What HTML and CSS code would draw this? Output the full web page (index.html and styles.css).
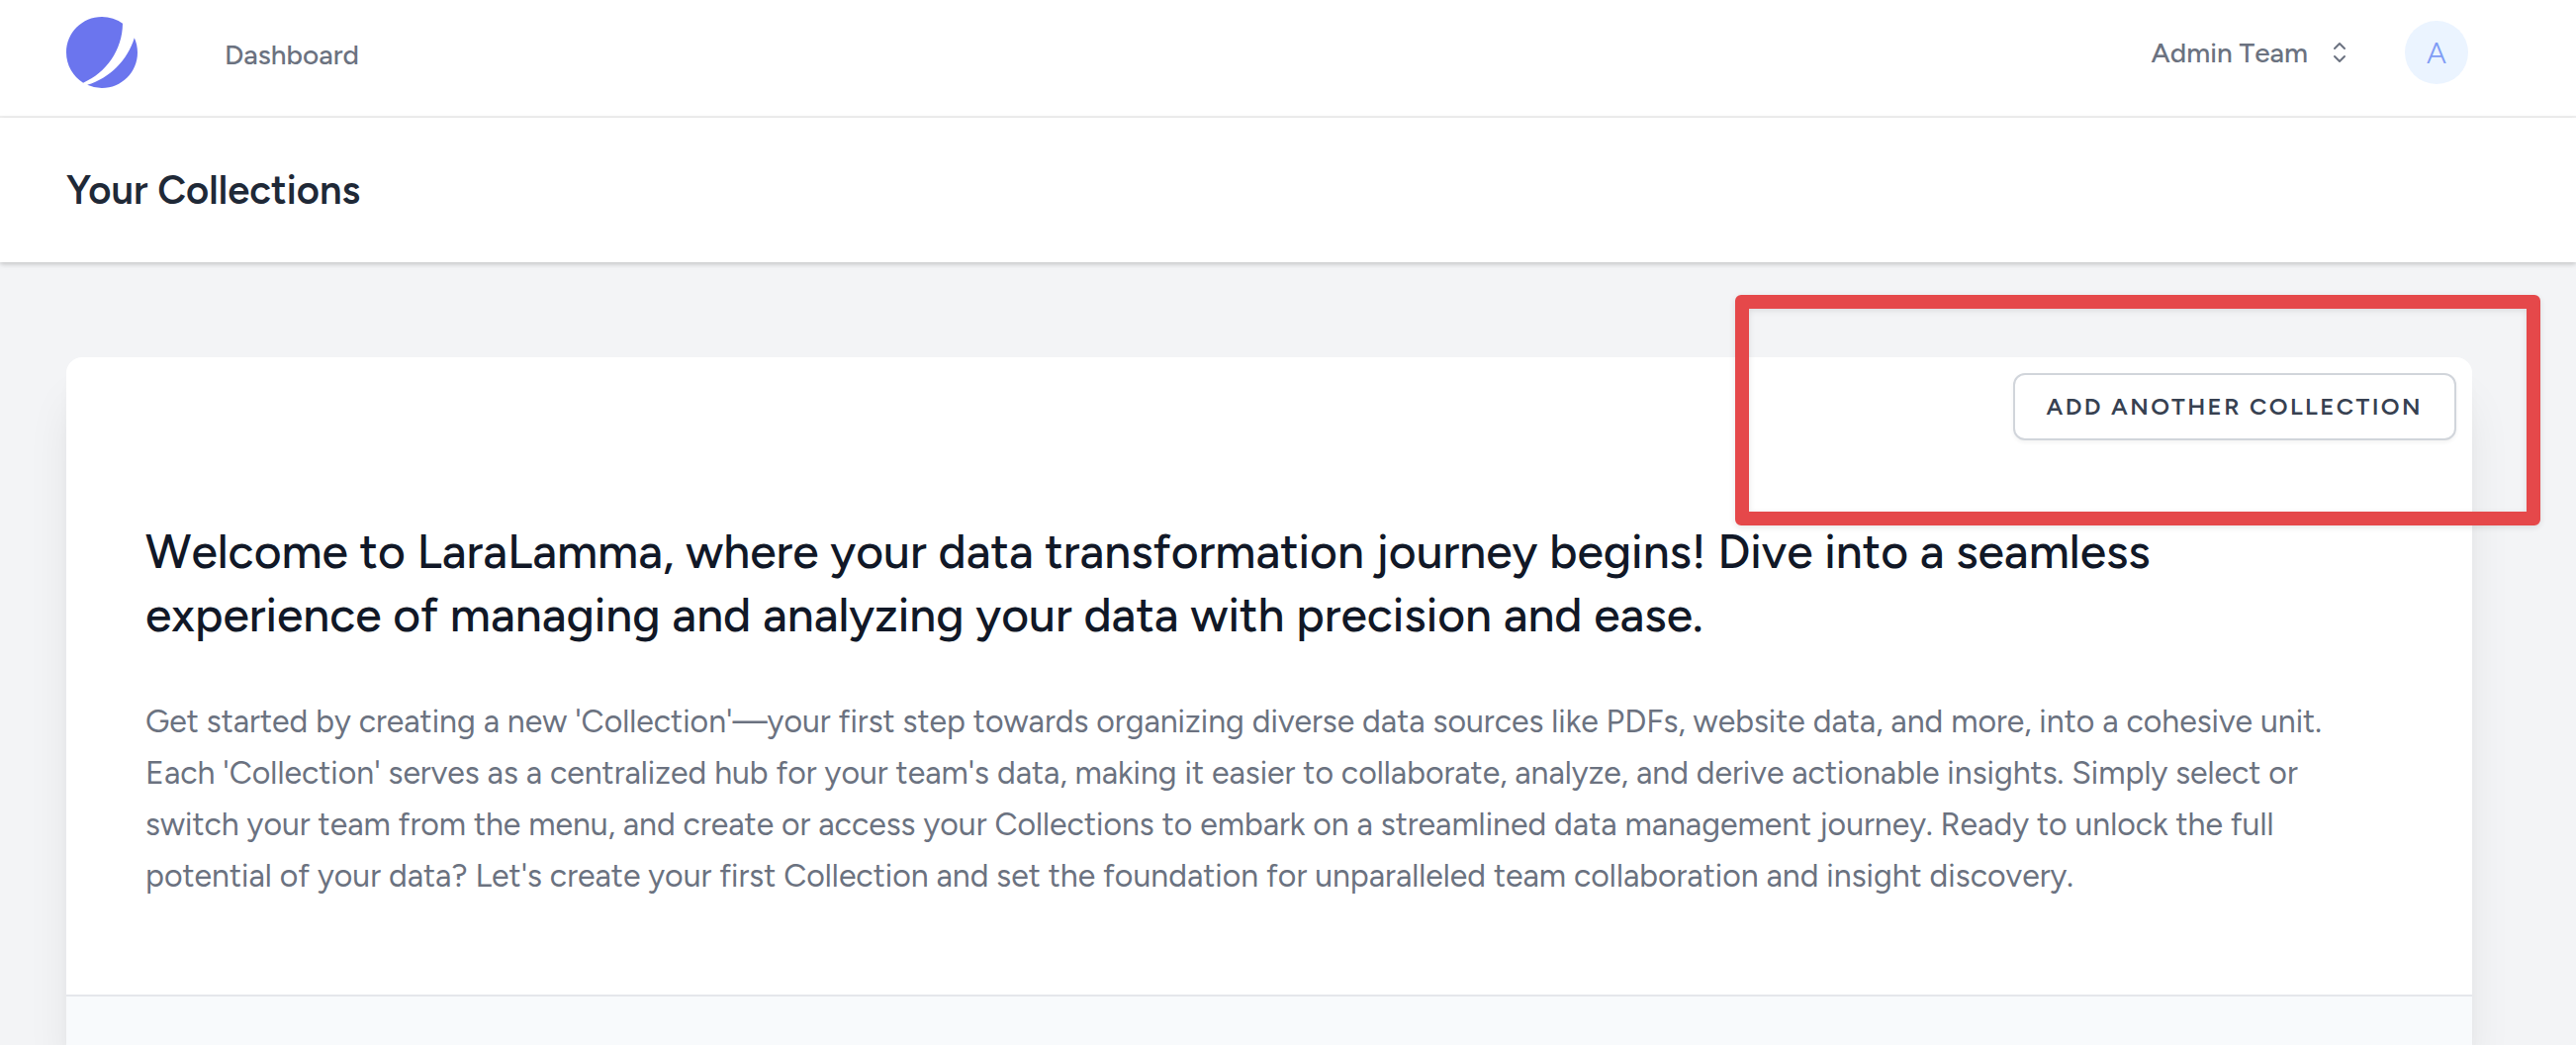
FILE: index.html
```html
<!DOCTYPE html>
<html lang="en">
<head>
  <meta charset="utf-8">
  <meta name="viewport" content="width=device-width, initial-scale=1">
  <title>Your Collections</title>
  <link rel="stylesheet" href="styles.css">
</head>
<body>
  <nav class="navbar">
    <a class="logo" href="#" aria-label="Home">
      <svg viewBox="0 0 48 48" fill="none" aria-hidden="true">
        <path d="M11.395 44.428C4.557 40.198 0 32.632 0 24 0 10.745 10.745 0 24 0a23.891 23.891 0 0113.997 4.502c-.2 17.907-11.097 33.245-26.602 39.926z" fill="#6B75EE"/>
        <path d="M14.134 45.885A23.914 23.914 0 0024 48c13.255 0 24-10.745 24-24 0-3.516-.756-6.856-2.115-9.866-4.659 15.143-16.608 27.092-31.75 31.751z" fill="#6B75EE"/>
      </svg>
    </a>
    <a class="nav-link" href="#">Dashboard</a>
    <button class="team-switch" type="button">
      Admin Team
      <svg viewBox="0 0 24 24" fill="none" stroke="currentColor" stroke-width="1.5" stroke-linecap="round" stroke-linejoin="round" aria-hidden="true">
        <path d="M8.25 15L12 18.75 15.75 15m-7.5-6L12 5.25 15.75 9"/>
      </svg>
    </button>
    <button class="avatar" type="button">A</button>
  </nav>

  <header class="page-header">
    <h2 class="page-title">Your Collections</h2>
  </header>

  <main class="content">
    <section class="card">
      <div class="card-actions">
        <button class="add-button" type="button">Add Another Collection</button>
      </div>
      <div class="intro">
        <h1 class="intro-title">Welcome to LaraLamma, where your data transformation journey begins! Dive into a seamless<br>experience of managing and analyzing your data with precision and ease.</h1>
        <p class="intro-text">Get started by creating a new 'Collection'—your first step towards organizing diverse data sources like PDFs, website data, and more, into a cohesive unit.<br>Each 'Collection' serves as a centralized hub for your team's data, making it easier to collaborate, analyze, and derive actionable insights. Simply select or<br>switch your team from the menu, and create or access your Collections to embark on a streamlined data management journey. Ready to unlock the full<br>potential of your data? Let's create your first Collection and set the foundation for unparalleled team collaboration and insight discovery.</p>
      </div>
      <div class="collections"></div>
    </section>
    <div class="highlight" aria-hidden="true"></div>
  </main>
</body>
</html>
```

FILE: styles.css
```css
*,
*::before,
*::after {
  box-sizing: border-box;
}

body {
  display: flex;
  flex-direction: column;
  min-height: 100vh;
  margin: 0;
  background: #f3f4f6;
  color: #111827;
  font-family: Figtree, Lato, "Noto Sans", sans-serif;
}

h1,
h2,
p {
  margin: 0;
}

button {
  font-family: inherit;
  cursor: pointer;
}

.navbar {
  display: flex;
  align-items: center;
  padding: 17px 109px 28px 67px;
  background: #fff;
  border-bottom: 2px solid #f0f0f0;
}

.logo,
.logo svg {
  display: block;
  width: 72px;
  height: 72px;
}

.nav-link {
  margin-left: 88px;
  padding-top: 4px;
  color: #6b7280;
  font-size: 28px;
  font-weight: 500;
  line-height: 40px;
  text-decoration: none;
}

.team-switch {
  display: flex;
  align-items: center;
  gap: 16px;
  margin-left: auto;
  padding: 0;
  border: 0;
  background: none;
  color: #6b7280;
  font-size: 28px;
  font-weight: 500;
  font-kerning: none;
  line-height: 36px;
}

.team-switch svg {
  width: 32px;
  height: 32px;
}

.avatar {
  width: 64px;
  height: 64px;
  margin-left: 50px;
  padding: 0;
  border: 0;
  border-radius: 50%;
  background: #ebf4ff;
  color: #7f9cf5;
  font-size: 30px;
  font-weight: 300;
}

.page-header {
  position: relative;
  padding: 48px 105px 48px 67px;
  background: #fff;
  box-shadow: 0 2px 6px rgba(0, 0, 0, 0.1), 0 2px 4px rgba(0, 0, 0, 0.1);
}

.page-title {
  color: #1f2937;
  font-size: 40px;
  font-weight: 600;
  line-height: 50px;
}

.content {
  position: relative;
  display: flex;
  flex: 1;
  flex-direction: column;
  padding: 96px 105px 0 67px;
  overflow: hidden;
}

.card {
  display: flex;
  flex: 1;
  flex-direction: column;
  background: #fff;
  border-radius: 16px 16px 0 0;
  box-shadow: 0 40px 50px -10px rgba(0, 0, 0, 0.1), 0 16px 20px -12px rgba(0, 0, 0, 0.1);
}

.card-actions {
  display: flex;
  justify-content: flex-end;
  padding: 16px 16px 0;
}

.add-button {
  padding: 16px 32px;
  border: 2px solid #d1d5db;
  border-radius: 12px;
  background: #fff;
  box-shadow: 0 2px 4px rgba(0, 0, 0, 0.05);
  color: #374151;
  font-size: 24px;
  font-weight: 600;
  letter-spacing: 0.1em;
  line-height: 32px;
  text-transform: uppercase;
}

.intro {
  padding: 80px 80px 94px;
  border-bottom: 2px solid #e5e7eb;
}

.intro-title {
  font-size: 48px;
  font-weight: 500;
  font-kerning: none;
  line-height: 64px;
  white-space: nowrap;
}

.intro-text {
  margin-top: 50px;
  color: #6b7280;
  font-size: 32px;
  font-kerning: none;
  line-height: 52px;
  white-space: nowrap;
}

.collections {
  flex: 1;
  background: #f8fafc;
}

/* Frame laid over the card's corner, around the add button */
.highlight {
  position: absolute;
  top: 33px;
  right: 36px;
  width: 814px;
  height: 233px;
  border: 14px solid #e5484a;
  border-radius: 6px;
  box-shadow: 0 2px 6px rgba(0, 0, 0, 0.1), inset 0 2px 6px rgba(0, 0, 0, 0.1);
  pointer-events: none;
}
```
